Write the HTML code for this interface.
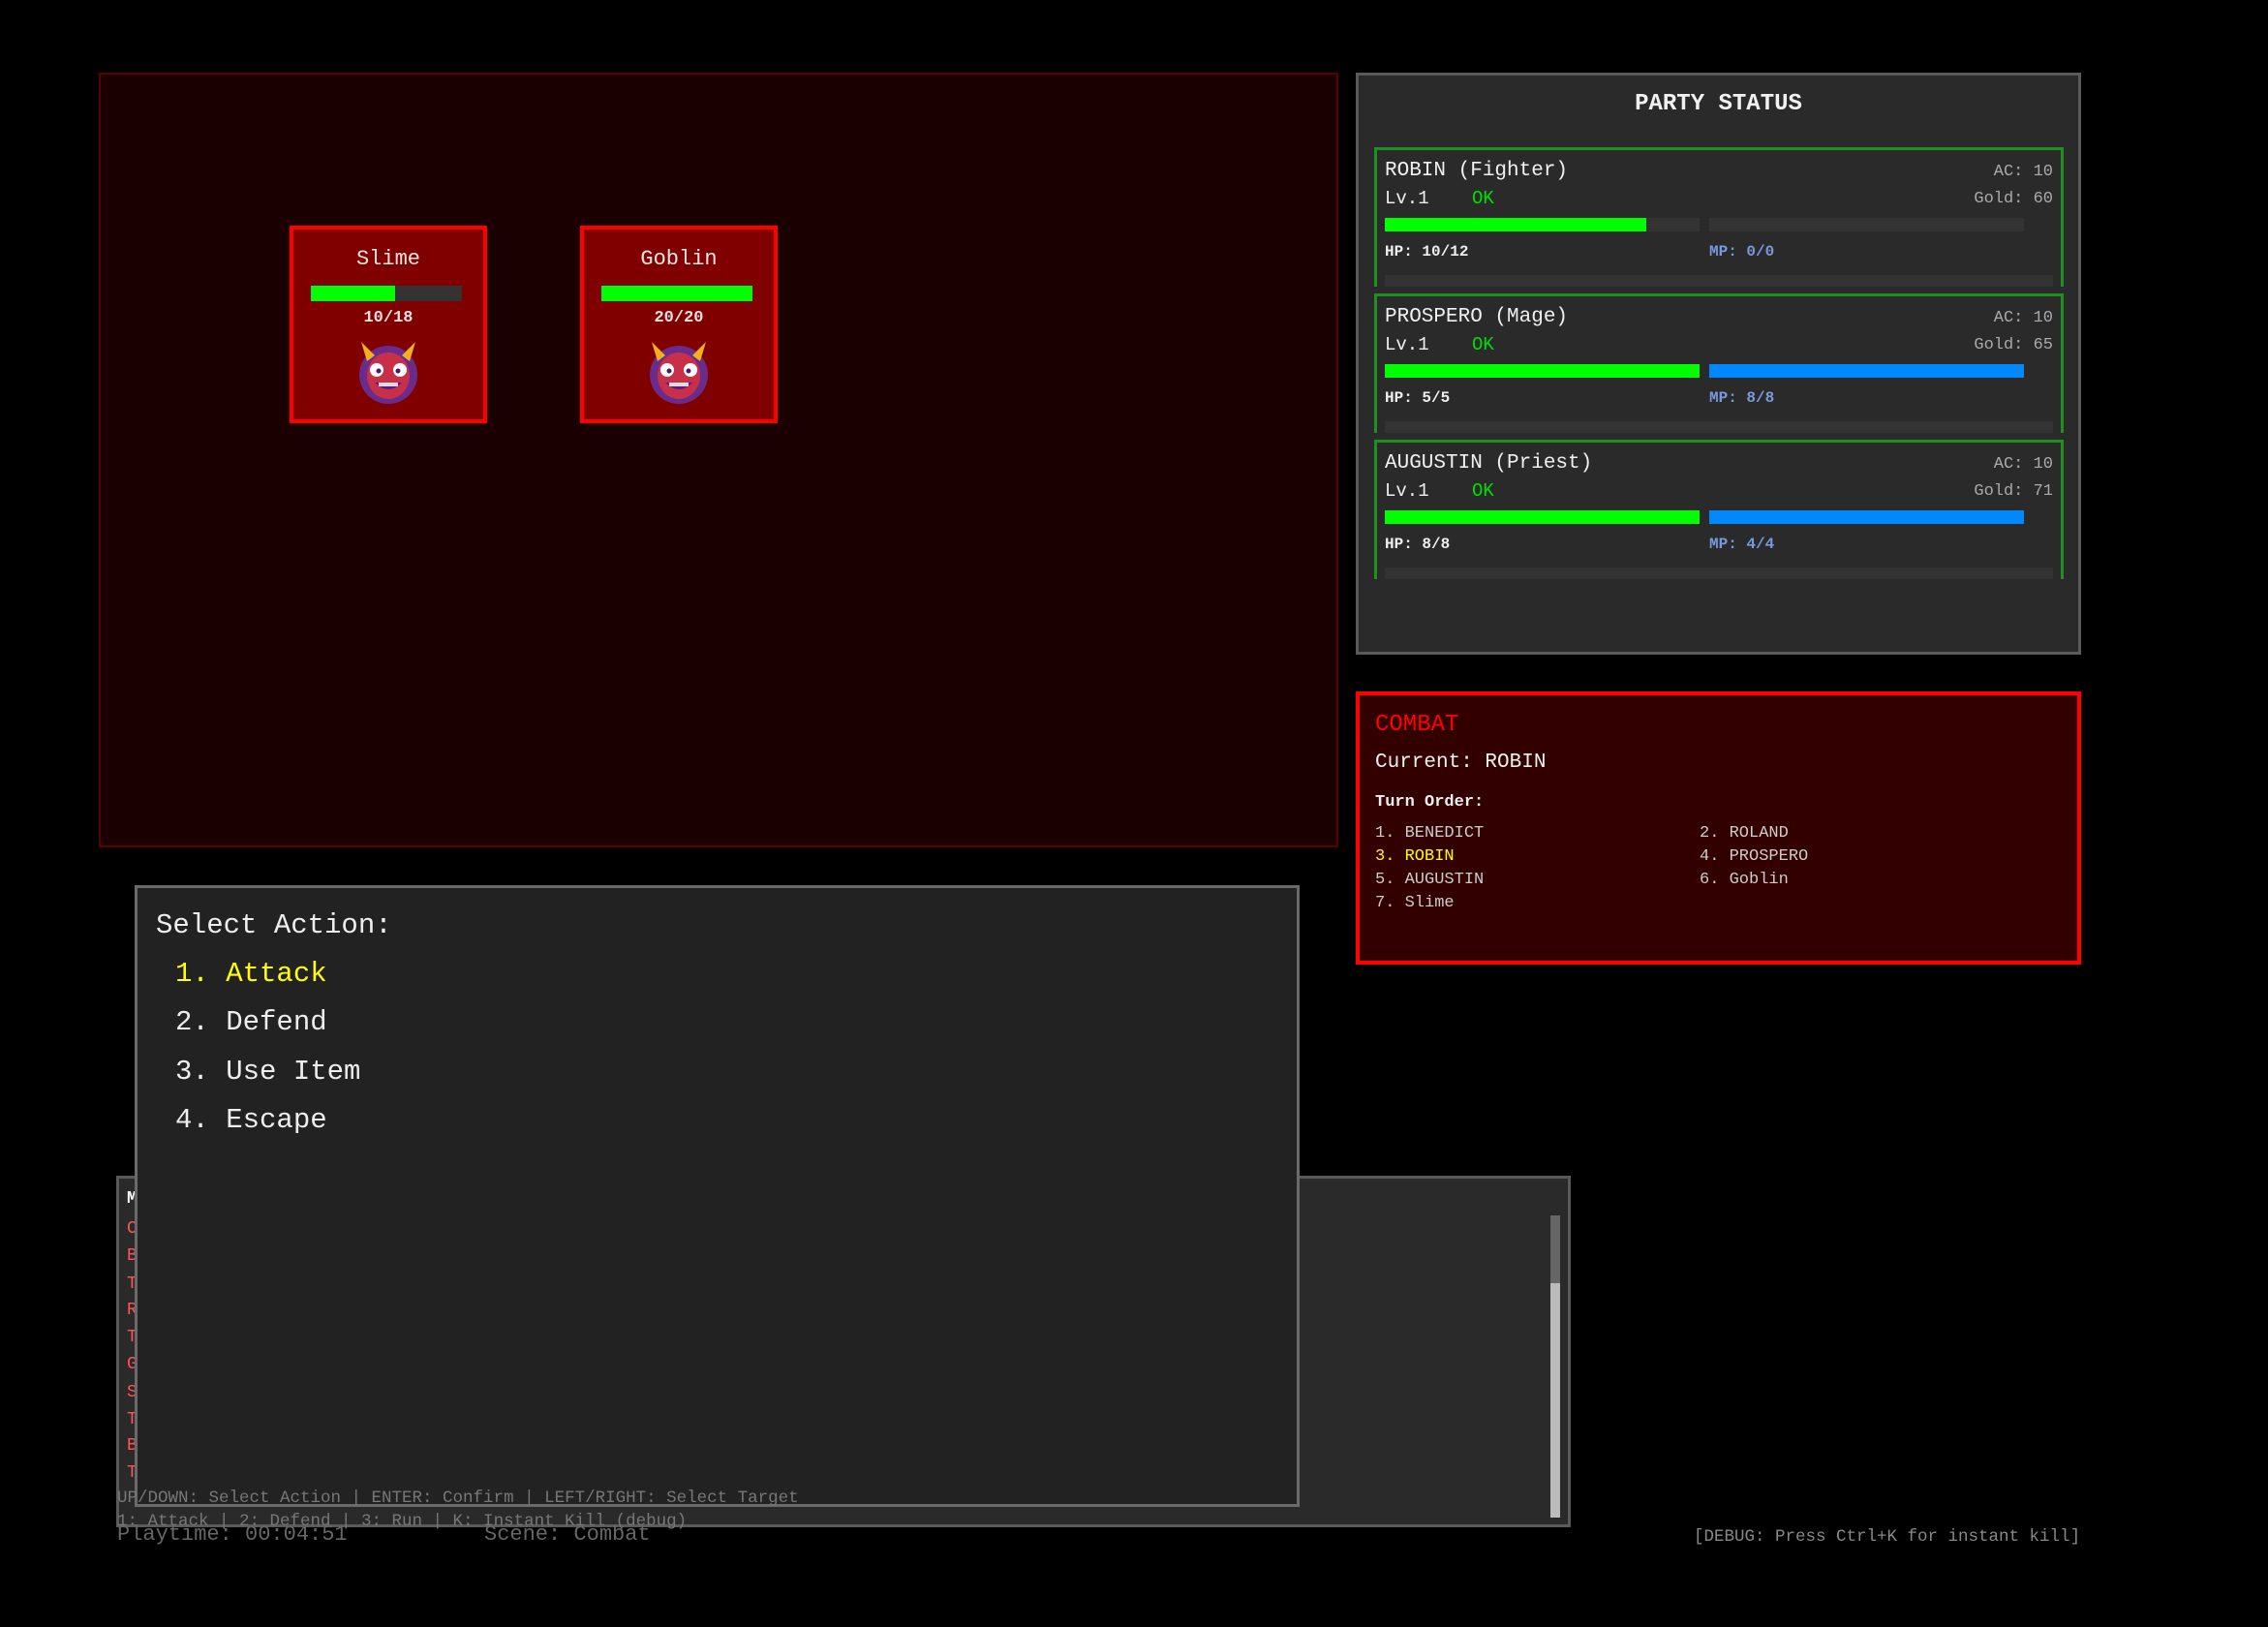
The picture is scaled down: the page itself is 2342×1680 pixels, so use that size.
<!DOCTYPE html>
<html><head><meta charset="utf-8"><style>
*{margin:0;padding:0;box-sizing:border-box}
body{width:2342px;height:1680px;background:#000;position:relative;overflow:hidden;font-family:"Liberation Mono","DejaVu Sans Mono",monospace;color:#eee}
.abs{position:absolute}
#battle{left:102px;top:75px;width:1280px;height:800px;background:#1a0000;border:2px solid #5a0000}
.enemy{top:233px;width:204px;height:204px;background:#800000;border:4px solid #ff0000;text-align:center}
.enemy .n{position:absolute;top:18px;left:0;right:0;font-size:22px;color:#f4e4e4}
.enemy .bar{position:absolute;left:18px;top:58px;width:156px;height:16px;background:#333}
.enemy .bar i{display:block;height:100%;background:#00ff00}
.enemy .hp{position:absolute;top:82px;left:0;right:0;font-size:17px;font-weight:bold;color:#f0e0e0}
.enemy svg{position:absolute;left:64px;top:112px}
#party{left:1400px;top:75px;width:749px;height:601px;background:#2a2a2a;border:3px solid #5a5a5a}
#party h2{position:absolute;top:16px;left:0;right:0;text-align:center;font-size:24px;font-weight:bold;color:#f0f0f0}
.mem{position:absolute;left:16px;width:712px;height:144px;border:3px solid #1f8f1f;border-bottom:none}
.mem .strip{position:absolute;left:8px;right:8px;bottom:0;height:12px;background:#333}
.mem .nm{position:absolute;left:8px;top:10px;font-size:21px;color:#f0f0f0}
.mem .ac{position:absolute;right:8px;top:13px;font-size:17px;color:#aaa}
.mem .lv{position:absolute;left:8px;top:39px;font-size:19px;color:#eee}
.mem .ok{position:absolute;left:98px;top:39px;font-size:19px;color:#00dd00}
.mem .gd{position:absolute;right:8px;top:41px;font-size:17px;color:#aaa}
.mem .hb{position:absolute;left:8px;top:70px;width:325px;height:14px;background:#333}
.mem .mb{position:absolute;left:343px;top:70px;width:325px;height:14px;background:#333}
.mem .hb i{display:block;height:100%;background:#00ff00}
.mem .mb i{display:block;height:100%;background:#0088ff}
.mem .ht{position:absolute;left:8px;top:96px;font-size:16px;font-weight:bold;color:#eee}
.mem .mt{position:absolute;left:343px;top:96px;font-size:16px;font-weight:bold;color:#7799dd}
#combat{left:1400px;top:714px;width:749px;height:282px;background:#330000;border:4px solid #ff0000}
#combat div{position:absolute;white-space:pre}
#log{left:120px;top:1214px;width:1502px;height:363px;background:#2a2a2a;border:3px solid #5a5a5a}
#log div{position:absolute;left:8px;font-size:18px;color:#ff5555;white-space:pre}
#menu{left:139px;top:914px;width:1203px;height:642px;background:#222;border:3px solid #6a6a6a}
#menu div{position:absolute;font-size:29px;white-space:pre;color:#eee}
.ft{position:absolute;font-size:18px;color:#777;white-space:pre}
</style></head><body>
<div id="battle" class="abs"></div>
<div class="abs enemy" style="left:299px"><div class="n">Slime</div><div class="bar"><i style="width:56%"></i></div><div class="hp">10/18</div>
<svg width="68" height="68" viewBox="0 0 68 68"><circle cx="34" cy="38" r="30" fill="#6a2c8c"/><ellipse cx="34" cy="39" rx="22" ry="24" fill="#c8304a"/><path d="M6 4 L20 18 L12 24Z" fill="#f0b020"/><path d="M62 4 L48 18 L56 24Z" fill="#f0b020"/><circle cx="22" cy="33" r="7" fill="#fff"/><circle cx="46" cy="33" r="7" fill="#fff"/><circle cx="24" cy="34" r="2.5" fill="#4a1a6a"/><circle cx="44" cy="34" r="2.5" fill="#4a1a6a"/><path d="M20 46 Q34 60 48 46Z" fill="#5a1a8a"/><rect x="24" y="46" width="20" height="4" fill="#ddd"/></svg></div>
<div class="abs enemy" style="left:599px"><div class="n">Goblin</div><div class="bar"><i style="width:100%"></i></div><div class="hp">20/20</div>
<svg width="68" height="68" viewBox="0 0 68 68"><circle cx="34" cy="38" r="30" fill="#6a2c8c"/><ellipse cx="34" cy="39" rx="22" ry="24" fill="#c8304a"/><path d="M6 4 L20 18 L12 24Z" fill="#f0b020"/><path d="M62 4 L48 18 L56 24Z" fill="#f0b020"/><circle cx="22" cy="33" r="7" fill="#fff"/><circle cx="46" cy="33" r="7" fill="#fff"/><circle cx="24" cy="34" r="2.5" fill="#4a1a6a"/><circle cx="44" cy="34" r="2.5" fill="#4a1a6a"/><path d="M20 46 Q34 60 48 46Z" fill="#5a1a8a"/><rect x="24" y="46" width="20" height="4" fill="#ddd"/></svg></div>

<div id="party" class="abs"><h2>PARTY STATUS</h2>
<div class="mem" style="top:74px"><div class="nm">ROBIN (Fighter)</div><div class="ac">AC: 10</div><div class="lv">Lv.1</div><div class="ok">OK</div><div class="gd">Gold: 60</div><div class="hb"><i style="width:83%"></i></div><div class="mb"></div><div class="ht">HP: 10/12</div><div class="mt">MP: 0/0</div><div class="strip"></div></div>
<div class="mem" style="top:225px"><div class="nm">PROSPERO (Mage)</div><div class="ac">AC: 10</div><div class="lv">Lv.1</div><div class="ok">OK</div><div class="gd">Gold: 65</div><div class="hb"><i style="width:100%"></i></div><div class="mb"><i style="width:100%"></i></div><div class="ht">HP: 5/5</div><div class="mt">MP: 8/8</div><div class="strip"></div></div>
<div class="mem" style="top:376px"><div class="nm">AUGUSTIN (Priest)</div><div class="ac">AC: 10</div><div class="lv">Lv.1</div><div class="ok">OK</div><div class="gd">Gold: 71</div><div class="hb"><i style="width:100%"></i></div><div class="mb"><i style="width:100%"></i></div><div class="ht">HP: 8/8</div><div class="mt">MP: 4/4</div><div class="strip"></div></div>
</div>

<div id="combat" class="abs">
<div style="left:16px;top:17px;font-size:24px;color:#ff0000">COMBAT</div>
<div style="left:16px;top:58px;font-size:21px;color:#f0f0f0">Current: ROBIN</div>
<div style="left:16px;top:101px;font-size:17px;font-weight:bold;color:#eee">Turn Order:</div>
<div style="left:16px;top:133px;font-size:17px;color:#ccc">1. BENEDICT</div>
<div style="left:351px;top:133px;font-size:17px;color:#ccc">2. ROLAND</div>
<div style="left:16px;top:157px;font-size:17px;color:#ffff00">3. ROBIN</div>
<div style="left:351px;top:157px;font-size:17px;color:#ccc">4. PROSPERO</div>
<div style="left:16px;top:181px;font-size:17px;color:#ccc">5. AUGUSTIN</div>
<div style="left:351px;top:181px;font-size:17px;color:#ccc">6. Goblin</div>
<div style="left:16px;top:205px;font-size:17px;color:#ccc">7. Slime</div>
</div>

<div id="log" class="abs">
<div style="top:11px;color:#fff;font-weight:bold">MESSAGE LOG</div>
<div style="top:42px">Combat begins!</div>
<div style="top:70px">BENEDICT attacks</div>
<div style="top:99px">The Slime</div>
<div style="top:126px">ROLAND attacks</div>
<div style="top:154px">The Goblin</div>
<div style="top:182px">Goblin attacks</div>
<div style="top:211px">Slime attacks</div>
<div style="top:239px">The attack</div>
<div style="top:266px">BENEDICT</div>
<div style="top:294px">The turn</div>
<div class="abs" style="left:1478px;top:38px;width:10px;height:312px;background:#bbb"></div>
<div class="abs" style="left:1478px;top:38px;width:10px;height:70px;background:#666"></div>
</div>

<div id="menu" class="abs">
<div style="left:19px;top:22px">Select Action:</div>
<div style="left:39px;top:72px;color:#ffff00">1. Attack</div>
<div style="left:39px;top:122px">2. Defend</div>
<div style="left:39px;top:173px">3. Use Item</div>
<div style="left:39px;top:223px">4. Escape</div>
</div>

<div class="ft" style="left:121px;top:1537px;font-size:17.5px">UP/DOWN: Select Action | ENTER: Confirm | LEFT/RIGHT: Select Target</div>
<div class="ft" style="left:121px;top:1561px;font-size:17.5px">1: Attack | 2: Defend | 3: Run | K: Instant Kill (debug)</div>
<div class="ft" style="left:121px;top:1572px;font-size:22px;color:#666">Playtime: 00:04:51</div>
<div class="ft" style="left:500px;top:1572px;font-size:22px;color:#666">Scene: Combat</div>
<div class="ft" style="left:1749px;top:1577px;width:399px;overflow:hidden;font-size:17.5px;color:#888">[DEBUG: Press Ctrl+K for instant kill]</div>
</body></html>
